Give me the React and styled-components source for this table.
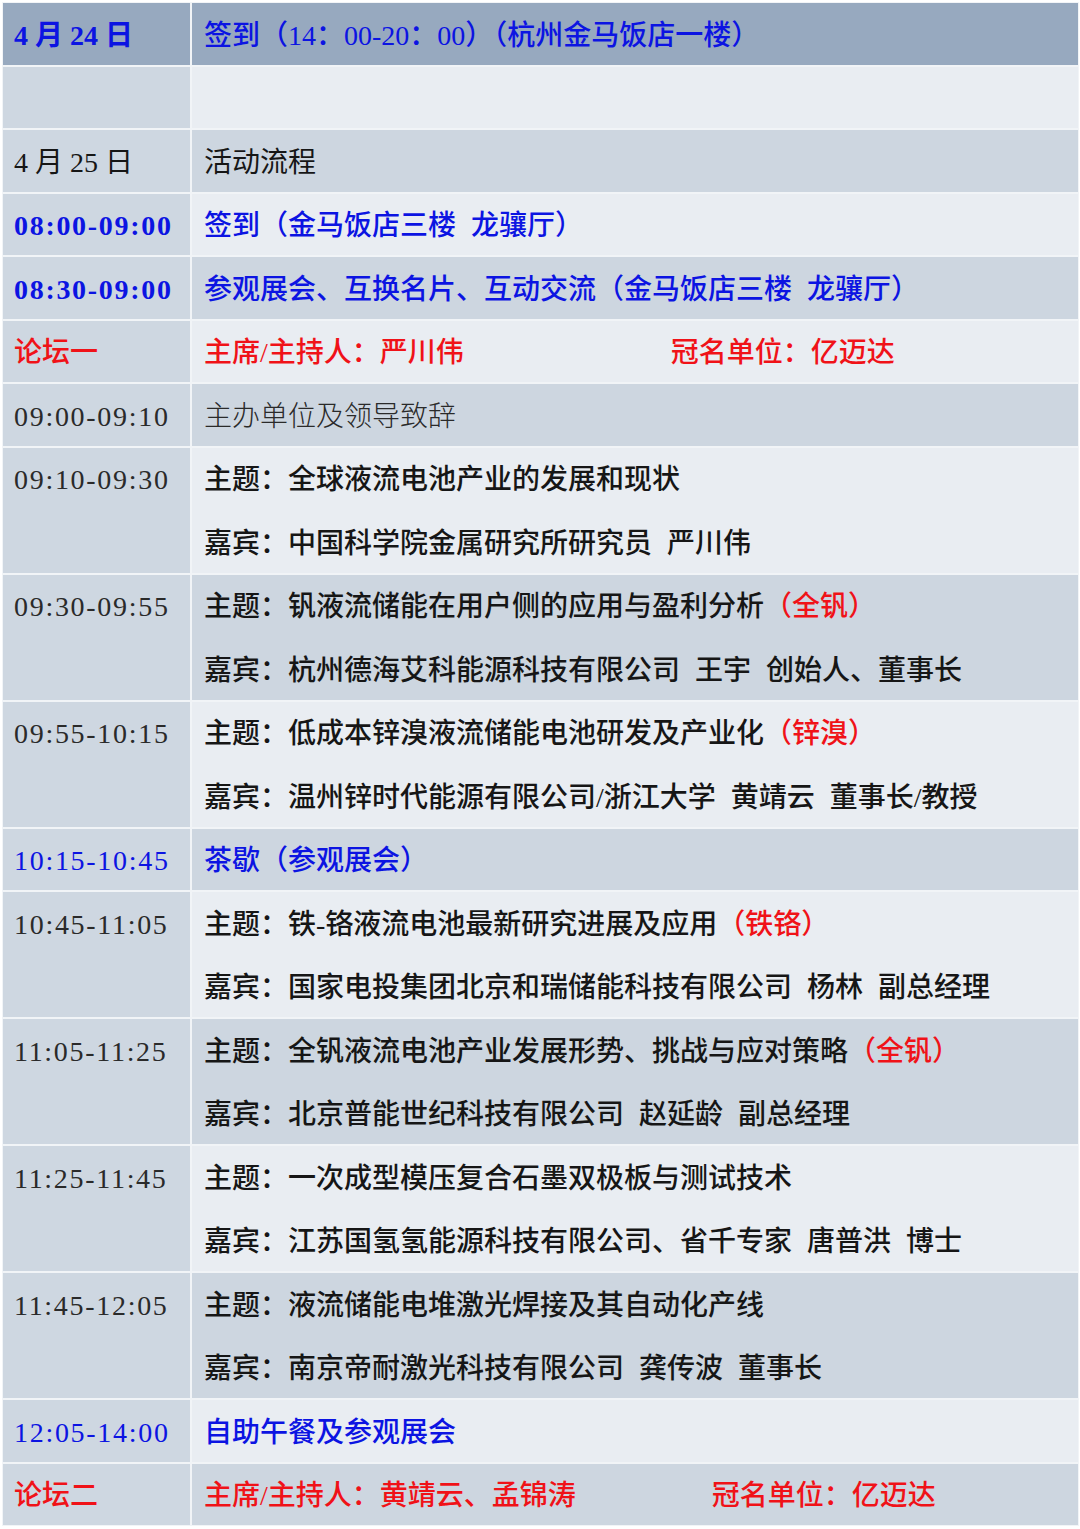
import React from "react";
import styled, { createGlobalStyle } from "styled-components";

const Global = createGlobalStyle`
  html, body { margin: 0; padding: 0; background: #ffffff; }
  body { font-family: "Liberation Serif", "Noto Sans CJK SC", serif; }
`;

const UNIT = 63.5;
const GAP = 2;

const tones = {
  blue: "#0c14e2",
  red: "#f01218",
  black: "#161616",
  gray: "#2a2a2a",
};

const Page = styled.div`
  padding: 2px 1px 2px 2px;
`;

const Table = styled.div`
  display: flex;
  flex-direction: column;
  gap: ${GAP}px;
  background: #f1f4f7;
  padding: 1px;
`;

const Row = styled.div`
  display: grid;
  grid-template-columns: 187px 1fr;
  column-gap: ${GAP}px;
  height: ${(p) => p.$lines * UNIT - GAP}px;
`;

const TimeCell = styled.div`
  background: ${(p) => (p.$head ? "#97a9bf" : "#ced7e1")};
  padding-left: 11px;
`;

const ContentCell = styled.div`
  background: ${(p) =>
    p.$head ? "#97a9bf" : p.$shade === "mid" ? "#cdd6e0" : "#e9edf2"};
  padding-left: 12px;
  display: flex;
  flex-direction: column;
`;

const Line = styled.div`
  height: ${UNIT - GAP}px;
  box-sizing: border-box;
  padding-top: 4px;
  flex: 0 0 auto;
  display: flex;
  align-items: center;
  white-space: nowrap;
  font-size: 28px;
  line-height: 1;
  &:not(:first-child) { margin-top: ${GAP}px; }
`;

const TimeText = styled.span`
  color: ${(p) => tones[p.$tone]};
  font-weight: ${(p) => p.$weight};
  letter-spacing: ${(p) => (p.$spaced ? "1.7px" : "0")};
`;

const Seg = styled.span`
  color: ${(p) => tones[p.$tone]};
  font-weight: ${(p) => p.$weight};
  margin-left: ${(p) => p.$gap || 0}px;
  word-spacing: 8px;
`;

const rows = [
  {
    head: true,
    time: "4 月 24 日",
    tTone: "blue",
    tWeight: 700,
    lines: [[{ t: "签到（14：00-20：00）（杭州金马饭店一楼）", tone: "blue", w: 500 }]],
  },
  { time: "", lines: [[]], shade: "light" },
  {
    time: "4 月 25 日",
    tTone: "black",
    tWeight: 400,
    shade: "mid",
    lines: [[{ t: "活动流程", tone: "black", w: 400 }]],
  },
  {
    time: "08:00-09:00",
    tTone: "blue",
    tWeight: 700,
    spaced: true,
    shade: "light",
    lines: [[{ t: "签到（金马饭店三楼 龙骧厅）", tone: "blue", w: 500 }]],
  },
  {
    time: "08:30-09:00",
    tTone: "blue",
    tWeight: 700,
    spaced: true,
    shade: "mid",
    lines: [[{ t: "参观展会、互换名片、互动交流（金马饭店三楼 龙骧厅）", tone: "blue", w: 500 }]],
  },
  {
    time: "论坛一",
    tTone: "red",
    tWeight: 500,
    shade: "light",
    lines: [
      [
        { t: "主席/主持人：严川伟", tone: "red", w: 500 },
        { t: "冠名单位：亿迈达", tone: "red", w: 500, gap: 207 },
      ],
    ],
  },
  {
    time: "09:00-09:10",
    tTone: "gray",
    tWeight: 400,
    spaced: true,
    shade: "mid",
    lines: [[{ t: "主办单位及领导致辞", tone: "gray", w: 300 }]],
  },
  {
    time: "09:10-09:30",
    tTone: "gray",
    tWeight: 400,
    spaced: true,
    shade: "light",
    lines: [
      [{ t: "主题：全球液流电池产业的发展和现状", tone: "black", w: 500 }],
      [{ t: "嘉宾：中国科学院金属研究所研究员 严川伟", tone: "black", w: 500 }],
    ],
  },
  {
    time: "09:30-09:55",
    tTone: "gray",
    tWeight: 400,
    spaced: true,
    shade: "mid",
    lines: [
      [
        { t: "主题：钒液流储能在用户侧的应用与盈利分析", tone: "black", w: 500 },
        { t: "（全钒）", tone: "red", w: 500 },
      ],
      [{ t: "嘉宾：杭州德海艾科能源科技有限公司 王宇 创始人、董事长", tone: "black", w: 500 }],
    ],
  },
  {
    time: "09:55-10:15",
    tTone: "gray",
    tWeight: 400,
    spaced: true,
    shade: "light",
    lines: [
      [
        { t: "主题：低成本锌溴液流储能电池研发及产业化", tone: "black", w: 500 },
        { t: "（锌溴）", tone: "red", w: 500 },
      ],
      [{ t: "嘉宾：温州锌时代能源有限公司/浙江大学 黄靖云 董事长/教授", tone: "black", w: 500 }],
    ],
  },
  {
    time: "10:15-10:45",
    tTone: "blue",
    tWeight: 400,
    spaced: true,
    shade: "mid",
    lines: [[{ t: "茶歇（参观展会）", tone: "blue", w: 500 }]],
  },
  {
    time: "10:45-11:05",
    tTone: "gray",
    tWeight: 400,
    spaced: true,
    shade: "light",
    lines: [
      [
        { t: "主题：铁-铬液流电池最新研究进展及应用", tone: "black", w: 500 },
        { t: "（铁铬）", tone: "red", w: 500 },
      ],
      [{ t: "嘉宾：国家电投集团北京和瑞储能科技有限公司 杨林 副总经理", tone: "black", w: 500 }],
    ],
  },
  {
    time: "11:05-11:25",
    tTone: "gray",
    tWeight: 400,
    spaced: true,
    shade: "mid",
    lines: [
      [
        { t: "主题：全钒液流电池产业发展形势、挑战与应对策略", tone: "black", w: 500 },
        { t: "（全钒）", tone: "red", w: 500 },
      ],
      [{ t: "嘉宾：北京普能世纪科技有限公司 赵延龄 副总经理", tone: "black", w: 500 }],
    ],
  },
  {
    time: "11:25-11:45",
    tTone: "gray",
    tWeight: 400,
    spaced: true,
    shade: "light",
    lines: [
      [{ t: "主题：一次成型模压复合石墨双极板与测试技术", tone: "black", w: 500 }],
      [{ t: "嘉宾：江苏国氢氢能源科技有限公司、省千专家 唐普洪 博士", tone: "black", w: 500 }],
    ],
  },
  {
    time: "11:45-12:05",
    tTone: "gray",
    tWeight: 400,
    spaced: true,
    shade: "mid",
    lines: [
      [{ t: "主题：液流储能电堆激光焊接及其自动化产线", tone: "black", w: 500 }],
      [{ t: "嘉宾：南京帝耐激光科技有限公司 龚传波 董事长", tone: "black", w: 500 }],
    ],
  },
  {
    time: "12:05-14:00",
    tTone: "blue",
    tWeight: 400,
    spaced: true,
    shade: "light",
    lines: [[{ t: "自助午餐及参观展会", tone: "blue", w: 500 }]],
  },
  {
    time: "论坛二",
    tTone: "red",
    tWeight: 500,
    shade: "mid",
    lines: [
      [
        { t: "主席/主持人：黄靖云、孟锦涛", tone: "red", w: 500 },
        { t: "冠名单位：亿迈达", tone: "red", w: 500, gap: 136 },
      ],
    ],
  },
];

export default function App() {
  return (
    <>
      <Global />
      <Page>
        <Table>
          {rows.map((r, i) => (
            <Row key={i} $lines={r.lines.length}>
              <TimeCell $head={r.head}>
                <Line>
                  <TimeText $tone={r.tTone || "black"} $weight={r.tWeight || 400} $spaced={r.spaced}>
                    {r.time}
                  </TimeText>
                </Line>
              </TimeCell>
              <ContentCell $head={r.head} $shade={r.shade}>
                {r.lines.map((segs, j) => (
                  <Line key={j}>
                    {segs.map((s, k) => (
                      <Seg key={k} $tone={s.tone} $weight={s.w} $gap={s.gap}>
                        {s.t}
                      </Seg>
                    ))}
                  </Line>
                ))}
              </ContentCell>
            </Row>
          ))}
        </Table>
      </Page>
    </>
  );
}
